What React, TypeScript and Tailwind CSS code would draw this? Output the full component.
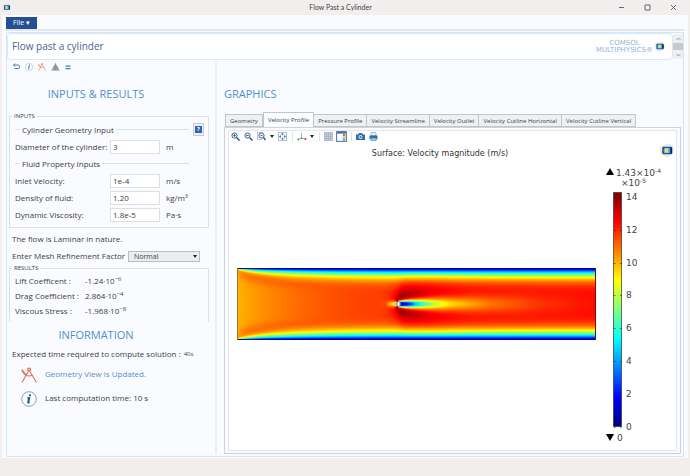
import type { ReactNode } from "react";

/* ---------- velocity field ---------- */

const PLOT_W = 358;
const PLOT_H = 72;
const CYL_X = 160;
const CYL_Y = 36;

const clamp = (v: number) => Math.min(1, Math.max(0, v));

function jet(v: number) {
  const t = clamp(v);
  const band = (c: number) => Math.round(255 * clamp(1.5 - Math.abs(4 * t - c)));
  return `rgb(${band(3)},${band(2)},${band(1)})`;
}

// Centreline velocity deficit behind the cylinder, [distance, deficit].
const WAKE: [number, number][] = [
  [0, 0.85],
  [3, 0.84],
  [8, 0.79],
  [13, 0.69],
  [18, 0.55],
  [26, 0.43],
  [38, 0.31],
  [55, 0.21],
  [90, 0.13],
  [140, 0.07],
  [200, 0.035],
];

function wakeDeficit(d: number) {
  for (let i = 1; i < WAKE.length; i++) {
    const [x1, y1] = WAKE[i];
    const [x0, y0] = WAKE[i - 1];
    if (d <= x1) return y0 + ((y1 - y0) * (d - x0)) / (x1 - x0);
  }
  return 0.035;
}

function speed(x: number, y: number) {
  const wall = Math.min(y, PLOT_H - y);
  const layer = 0.4 + 11.5 * (1 - Math.exp(-Math.pow(x / 75, 0.7)));
  const core = 0.7 + 0.185 * (1 - Math.exp(-x / 130));
  const shoulder =
    0.08 * Math.exp(-x / 60) * (1 - Math.exp(-x / 6)) * Math.exp(-Math.pow(wall - layer * 1.9, 2) / 60);
  const profile = Math.tanh(wall / layer);
  let v = (core + shoulder) * profile;

  const dx = x - CYL_X;
  const dy = y - CYL_Y;
  const side = Math.abs(dy);
  const r = Math.hypot(dx, dy) + 0.01;
  const along = dx - side * 0.4;
  const reach = Math.hypot(along / (along > 0 ? 1.8 : 0.4), Math.max(0, side - 4)) / 12;
  v += 0.19 * Math.exp(-reach) * clamp((side - 1) / 3) * profile;
  if (dx > 0) {
    v += 0.03 * (1 - Math.exp(-dx / 12)) * profile;
    v -= wakeDeficit(dx) * Math.exp((-dy * dy) / (2 * (4 + 0.42 * dx)));
  } else {
    v -= 0.42 * Math.exp(-Math.max(0, r - 2) / 1.8) * Math.pow(Math.abs(dx) / r, 2);
    v -= 0.09 * Math.exp(-r / 8) * Math.pow(Math.abs(dx) / r, 2);
  }
  return v;
}

const COLUMNS: number[] = [];
for (let x = 0; x <= PLOT_W; ) {
  COLUMNS.push(x);
  x += x < 20 || (x >= CYL_X - 10 && x < CYL_X + 24) ? 2 : x < CYL_X + 60 && x > CYL_X ? 4 : 8;
}
if (COLUMNS[COLUMNS.length - 1] !== PLOT_W) COLUMNS.push(PLOT_W);

const ROWS = Array.from({ length: PLOT_H }, (_, i) => i);

function VelocityField() {
  return (
    <svg
      className="block h-[72px] w-full"
      viewBox="0 0 358 72"
      preserveAspectRatio="none"
      role="img"
      aria-label="Velocity magnitude around the cylinder"
    >
      <defs>
        {ROWS.map((row) => (
          <linearGradient key={row} id={`row${row}`} gradientUnits="userSpaceOnUse" x1="0" x2="358" y1="0" y2="0">
            {COLUMNS.map((x) => (
              <stop key={x} offset={x / PLOT_W} stopColor={jet(speed(x, row + 0.5))} />
            ))}
          </linearGradient>
        ))}
      </defs>
      {ROWS.map((row) => (
        <rect key={row} x="0" y={row} width="358" height="1" fill={`url(#row${row})`} shapeRendering="crispEdges" />
      ))}
      <rect x="0" y="0" width="358" height="1" fill="#000084" />
      <rect x="0" y="71" width="358" height="1" fill="#000084" />
      <rect x="0" y="0" width="1" height="72" fill="#8f7a3a" />
      <rect x="357" y="0" width="1" height="72" fill="#7a0a10" />
      <rect x="158" y="35" width="2" height="2" fill="#59c9c9" />
      <rect x="160" y="34" width="2" height="4" fill="#fff" />
      <rect x="162" y="35" width="1" height="2" fill="#fff" />
    </svg>
  );
}

function ColorLegend() {
  const stops = Array.from({ length: 33 }, (_, i) => i / 32);
  return (
    <svg
      className="block h-[276px] w-[72px] shrink-0"
      viewBox="0 0 72 276"
      fontFamily="'DejaVu Sans', sans-serif"
      fontSize="9"
      fill="#444"
    >
      <defs>
        <linearGradient id="scale" x1="0" x2="0" y1="1" y2="0">
          {stops.map((s) => (
            <stop key={s} offset={s} stopColor={jet(s)} />
          ))}
        </linearGradient>
      </defs>
      <path d="M6 2l4 7H2z" fill="#000" />
      <text x="12" y="10">
        1.43×10
        <tspan dy="-3" fontSize="6">
          -4
        </tspan>
      </text>
      <text x="17" y="20">
        ×10
        <tspan dy="-3" fontSize="6">
          -5
        </tspan>
      </text>
      <rect x="9.500" y="26.500" width="8" height="234" fill="url(#scale)" stroke="#333" strokeOpacity=".7" />
      {[0, 2, 4, 6, 8, 10, 12, 14].map((n) => {
        const y = Math.round(261 - n * 16.45);
        return (
          <g key={n}>
            <path d={`M10 ${y + 0.5}h1.500M16 ${y + 0.5}h1.500`} stroke="#222" strokeOpacity=".6" />
            <text x="22" y={y + 3}>
              {n}
            </text>
          </g>
        );
      })}
      <path d="M6 275l4-7H2z" fill="#000" />
      <text x="13" y="275">
        0
      </text>
    </svg>
  );
}

/* ---------- icons ---------- */

function Cube({ className }: { className: string }) {
  return (
    <svg className={className} viewBox="0 0 16 16" aria-hidden="true">
      <path d="M1 4l10-3 4 3v7l-6 4-6-2z" fill="#eceef0" stroke="#dcdfe3" strokeWidth=".6" />
      <rect x="3.500" y="4" width="10.500" height="8" rx="1.500" fill="#173f9e" />
      <rect x="5" y="5" width="7" height="6" rx="1" fill="#3fa9d8" />
      <rect x="6" y="5.500" width="4" height="5" rx="1" fill="#e6dc6a" />
      <path d="M12.500 5H14v6h-1.500z" fill="#0b1f66" />
    </svg>
  );
}

function Compass({ className }: { className: string }) {
  return (
    <svg className={className} viewBox="0 0 16 16" fill="none" stroke="#e0705c" strokeWidth="1.100" aria-hidden="true">
      <path d="M1 15.500L8 3l7.500 12.500" />
      <path d="M6.800 4V1.300h2.600V4" />
      <path d="M.8 2.500C2 8 7 10.500 11.500 8M.8 2.500L6 8.500" />
    </svg>
  );
}

function Info({ className }: { className: string }) {
  return (
    <svg className={className} viewBox="0 0 16 16" aria-hidden="true">
      <circle cx="8" cy="8" r="7.300" fill="#fcfdff" stroke="#6d89b0" strokeWidth=".8" />
      <circle cx="9" cy="4.300" r="1.100" fill="#1d4a8a" />
      <path d="M6.200 6.800h2.400L7.400 12h1.400M7.900 7l-1.200 5" fill="none" stroke="#1d4a8a" strokeWidth="1.200" />
    </svg>
  );
}

function Magnifier({ kind }: { kind: "in" | "out" | "box" }) {
  return (
    <svg className="size-[9px]" viewBox="0 0 18 18" fill="none" stroke="#2f5577" strokeWidth="1.800" aria-hidden="true">
      {kind === "box" && <path d="M1 1h10M1 1v14h9" strokeDasharray="2 2" stroke="#7a8794" />}
      <circle cx={kind === "box" ? 9 : 7} cy="7" r="5.200" fill="#eef6fc" />
      <path d={kind === "box" ? "M13 11l4 5" : "M11 11l6 6"} strokeWidth="2.800" />
      {kind !== "box" && <path d="M4.500 7h5" />}
      {kind === "in" && <path d="M7 4.500v5" />}
      {kind === "box" && <path d="M7 7h4" />}
    </svg>
  );
}

function Extents() {
  return (
    <svg className="size-[9px]" viewBox="0 0 18 18" fill="none" stroke="#4b6d91" strokeWidth="1.400" aria-hidden="true">
      <path d="M1 1h16v16H1z" stroke="#8ba1b8" />
      <path d="M9 3v12M3 9h12" strokeWidth="2" stroke="#3c77ad" />
      <path d="M6 5.500L9 2.500l3 3M6 12.500l3 3 3-3M5.500 6l-3 3 3 3M12.500 6l3 3-3 3" />
      <path d="M7 7h4v4H7z" fill="#fff" stroke="#fff" />
    </svg>
  );
}

function Axes() {
  return (
    <svg className="size-[10px]" viewBox="0 0 20 20" fill="none" strokeWidth="1.600" aria-hidden="true">
      <path d="M9 12V2" stroke="#7fa6dd" />
      <path d="M9 12l-6 3" stroke="#5aa56a" />
      <path d="M9 12l8 2" stroke="#e0707c" />
      <circle cx="2.500" cy="15" r="1.800" fill="#2f9a48" />
      <circle cx="17" cy="14" r="1.800" fill="#d3253a" />
      <circle cx="9" cy="13" r="1.500" fill="#5a6b80" />
    </svg>
  );
}

function GridIcon() {
  return (
    <svg className="size-[9px]" viewBox="0 0 18 18" aria-hidden="true">
      <path d="M.5.5h17v17H.5z" fill="#c8d3df" stroke="#7f8a96" />
      <path d="M1 5h16M1 9h16M1 13h16M5 1v16M9 1v16M13 1v16" stroke="#94a3b3" />
    </svg>
  );
}

function LegendIcon() {
  return (
    <svg className="size-[11px]" viewBox="0 0 22 22" aria-hidden="true">
      <path d="M1 1h20v20H1z" fill="#c5dcf2" stroke="#5b80aa" strokeWidth="2" />
      <path d="M3 6h10v13H3z" fill="#fff" />
      <path d="M2 2h18v3H2z" fill="#44709c" />
      <path d="M14 6h4v5h-4z" fill="#e36b3d" />
      <path d="M14 10h4v5h-4z" fill="#f3cf4a" />
      <path d="M14 15h4v4h-4z" fill="#4aa7d6" />
    </svg>
  );
}

function Camera() {
  return (
    <svg className="size-[9px]" viewBox="0 0 18 18" aria-hidden="true">
      <path d="M0 5h4l2-3h6l2 3h4v11H0z" fill="#2f6da5" />
      <circle cx="9" cy="10" r="4" fill="#d7eafa" />
      <circle cx="9" cy="10" r="2" fill="#2f6da5" />
    </svg>
  );
}

function Printer() {
  return (
    <svg className="size-[9px]" viewBox="0 0 18 18" aria-hidden="true">
      <path d="M4 1h10v6H4z" fill="#e6eff8" stroke="#5d86ad" />
      <path d="M1 7h16v7H1z" fill="#2f6da5" />
      <path d="M3.500 12h11v5h-11z" fill="#a9c8e4" stroke="#2f6da5" />
    </svg>
  );
}

function Caret() {
  return (
    <svg className="h-[3px] w-[4px]" viewBox="0 0 8 6" aria-hidden="true">
      <path d="M0 0h8L4 6z" fill="#222" />
    </svg>
  );
}

/* ---------- form parts ---------- */

function IconButton({ label, children }: { label: string; children: ReactNode }) {
  return (
    <button type="button" aria-label={label} className="flex h-[11px] w-[13px] items-center justify-center">
      {children}
    </button>
  );
}

function Separator() {
  return (
    <span className="flex w-[6px] justify-center">
      <span className="h-[9px] w-px bg-[#dfe2e7]" />
    </span>
  );
}

function GroupTitle({ children }: { children: ReactNode }) {
  return (
    <div className="flex h-[17px] w-[174px] items-center gap-[2px]">
      <span className="h-px w-[5px] bg-[#dcdfe4]" />
      <span className="whitespace-nowrap">{children}</span>
      <span className="h-px flex-1 bg-[#dcdfe4]" />
    </div>
  );
}

function Field({ id, label, value, unit }: { id: string; label: string; value: string; unit: ReactNode }) {
  return (
    <div className="flex h-[17px] items-center">
      <label htmlFor={id} className="w-[95px] whitespace-nowrap">
        {label}
      </label>
      <input
        id={id}
        defaultValue={value}
        className="h-[14px] w-[50px] border border-[#dddfe3] bg-white px-[2px] leading-3 outline-none"
      />
      <span className="pl-[6px]">{unit}</span>
    </div>
  );
}

function Result({ label, mantissa, exponent }: { label: string; mantissa: string; exponent: string }) {
  return (
    <div className="flex h-[15px] items-center">
      <dt className="w-[70px] whitespace-nowrap">{label}</dt>
      <dd className="leading-3">
        {mantissa}·10<sup className="text-[6px]">{exponent}</sup>
      </dd>
    </div>
  );
}

const TABS = [
  "Geometry",
  "Velocity Profile",
  "Pressure Profile",
  "Velocity Streamline",
  "Velocity Outlet",
  "Velocity Cutline Horizontal",
  "Velocity Cutline Vertical",
];

function SectionTitle({ children }: { children: ReactNode }) {
  return <h2 className="h-4 text-[11px] leading-4 text-[#4f90cb]">{children}</h2>;
}

function InputsPanel() {
  return (
    <section className="flex w-[210px] shrink-0 flex-col border-r-2 border-[#eceef2] pl-[2px] pr-[6px] text-[8px]">
      <div className="flex h-[11px] items-center gap-[3px] pl-[2px]">
        <button type="button" aria-label="Undo" className="flex w-[10px] justify-center">
          <svg className="size-[7px]" viewBox="0 0 14 14" fill="none" stroke="#4b7fb5" strokeWidth="2">
            <path d="M1 4h9a3 3 0 010 7H3M4 1L1 4l3 3" />
          </svg>
        </button>
        <button type="button" aria-label="Information" className="flex w-[10px] justify-center">
          <Info className="size-[8px] opacity-80" />
        </button>
        <button type="button" aria-label="Geometry" className="flex w-[10px] justify-center">
          <Compass className="size-[8px]" />
        </button>
        <button type="button" aria-label="Mesh" className="flex w-[10px] justify-center">
          <svg className="size-[9px]" viewBox="0 0 18 18">
            <path d="M9 2l8.500 15H.5z" fill="#9aa0a6" />
            <path d="M9 2v15M5 9l8 8M13 9l-8 8M5 10h8" stroke="#868c93" />
          </svg>
        </button>
        <button type="button" aria-label="Compute" className="flex w-[10px] justify-center">
          <svg className="size-[6px]" viewBox="0 0 12 12">
            <path d="M1 4h10M1 9h10" stroke="#2f86a8" strokeWidth="2.500" />
          </svg>
        </button>
      </div>

      <div className="mt-[14px] flex justify-center pr-[26px]">
        <SectionTitle>INPUTS &amp; RESULTS</SectionTitle>
      </div>

      <fieldset className="mt-[9px] border border-[#dcdfe4] pb-1 pl-[5px]">
        <legend className="-ml-[3px] px-[2px] text-[6px] leading-[10px]">INPUTS</legend>
        <div className="flex items-center justify-between pr-1">
          <GroupTitle>Cylinder Geometry Input</GroupTitle>
          <button
            type="button"
            aria-label="Help"
            className="flex h-[13px] w-[11px] items-center justify-center border border-[#c9ccd1] bg-[#edeff2]"
          >
            <span className="size-[7px] bg-[#2a67ad] text-[6px] font-bold leading-[7px] text-white">?</span>
          </button>
        </div>
        <Field id="diameter" label="Diameter of the cylinder:" value="3" unit="m" />
        <GroupTitle>Fluid Property Inputs</GroupTitle>
        <Field id="velocity" label="Inlet Velocity:" value="1e-4" unit="m/s" />
        <Field id="density" label="Density of fluid:" value="1.20" unit="kg/m³" />
        <Field id="viscosity" label="Dynamic Viscosity:" value="1.8e-5" unit="Pa·s" />
      </fieldset>

      <p className="mt-1 pl-[3px] leading-[14px]">The flow is Laminar in nature.</p>
      <div className="mt-[3px] flex h-[14px] items-center justify-between pl-[3px] pr-[9px]">
        <label htmlFor="mesh" className="whitespace-nowrap">
          Enter Mesh Refinement Factor
        </label>
        <div className="relative">
          <select
            id="mesh"
            className="block h-[11px] w-[72px] appearance-none border border-[#b9bcc1] bg-[#ebedef] pl-[5px] text-[7px] leading-[9px]"
          >
            <option>Normal</option>
          </select>
          <span className="pointer-events-none absolute right-[3px] top-1">
            <Caret />
          </span>
        </div>
      </div>

      <fieldset className="border border-b-0 border-[#dcdfe4] pb-1 pl-[5px]">
        <legend className="-ml-[3px] px-[2px] text-[6px] leading-[10px]">RESULTS</legend>
        <dl>
          <Result label="Lift Coefficent :" mantissa="-1.24" exponent="−6" />
          <Result label="Drag Coefficient :" mantissa="2.864" exponent="−4" />
          <Result label="Viscous Stress :" mantissa="-1.968" exponent="−8" />
        </dl>
      </fieldset>

      <div className="mt-[5px] flex justify-center pr-[26px]">
        <SectionTitle>INFORMATION</SectionTitle>
      </div>
      <p className="mt-1 flex items-center gap-[3px] pl-[3px] leading-[14px]">
        <span className="whitespace-nowrap">Expected time required to compute solution :</span>
        <span className="text-[6px]">40s</span>
      </p>
      <div className="mt-[6px] flex h-[18px] pl-[12px] leading-[14px] text-[#4f90cb]">
        <Compass className="size-[16px]" />
        <p className="pl-2">Geometry View is Updated.</p>
      </div>
      <div className="mt-[6px] flex h-[18px] pl-[12px] leading-[14px]">
        <Info className="size-[16px]" />
        <p className="pl-2">Last computation time: 10 s</p>
      </div>
    </section>
  );
}

function GraphicsPanel() {
  return (
    <section className="flex min-w-0 flex-1 flex-col pl-[7px] pr-[2px]">
      <div className="mt-[25px]">
        <SectionTitle>GRAPHICS</SectionTitle>
      </div>
      <div role="tablist" className="mt-[10px] flex h-[15px] items-end pl-px">
        {TABS.map((tab) =>
          tab === "Velocity Profile" ? (
            <button
              key={tab}
              type="button"
              role="tab"
              aria-selected="true"
              className="h-[15px] whitespace-nowrap border border-b-0 border-[#c2c5ca] bg-[#fbfcff] px-1 text-[6px] leading-[13px]"
            >
              {tab}
            </button>
          ) : (
            <button
              key={tab}
              type="button"
              role="tab"
              aria-selected="false"
              className="h-[13px] whitespace-nowrap border border-l-0 border-[#c2c5ca] bg-[#eef0f2] px-1 text-[6px] leading-3 first:border-l"
            >
              {tab}
            </button>
          ),
        )}
      </div>
      <div className="flex flex-1 flex-col border border-[#cfd2d8] px-[3px] py-[2px]">
        <div className="flex flex-1 flex-col border border-[#e3e6ec] bg-white">
          <div className="flex h-[11px] items-center">
            <IconButton label="Zoom in">
              <Magnifier kind="in" />
            </IconButton>
            <IconButton label="Zoom out">
              <Magnifier kind="out" />
            </IconButton>
            <IconButton label="Zoom box">
              <Magnifier kind="box" />
            </IconButton>
            <span className="px-[2px]">
              <Caret />
            </span>
            <IconButton label="Zoom extents">
              <Extents />
            </IconButton>
            <Separator />
            <IconButton label="View orientation">
              <Axes />
            </IconButton>
            <span className="px-[2px]">
              <Caret />
            </span>
            <Separator />
            <IconButton label="Show grid">
              <GridIcon />
            </IconButton>
            <IconButton label="Show legends">
              <LegendIcon />
            </IconButton>
            <Separator />
            <IconButton label="Snapshot">
              <Camera />
            </IconButton>
            <IconButton label="Print">
              <Printer />
            </IconButton>
          </div>
          <div className="flex h-[24px] items-center">
            <h3 className="flex-1 pr-2 text-center font-['DejaVu_Sans',sans-serif] text-[8px] text-[#333]">
              Surface: Velocity magnitude (m/s)
            </h3>
            <Cube className="mb-2 mr-[2px] size-[15px]" />
          </div>
          <div className="flex items-center gap-2 pl-[8px]">
            <div className="min-w-0 flex-1">
              <VelocityField />
            </div>
            <ColorLegend />
          </div>
        </div>
      </div>
    </section>
  );
}

export default function App() {
  return (
    <div className="flex min-h-screen flex-col bg-[#f1eeed] pb-[18px] font-['Open_Sans','Noto_Sans',sans-serif] text-[#3c3e42]">
      <header className="flex h-[15px] items-center font-['Lato',sans-serif] text-[7px]">
        <div className="flex-1 pl-[2px]">
          <Cube className="size-[9px]" />
        </div>
        <h1>Flow Past a Cylinder</h1>
        <div className="flex flex-1 justify-end gap-[15px] pr-[11px] text-[#666]">
          <button type="button" aria-label="Minimize" className="flex size-[11px] items-center justify-center">
            <svg className="size-[7px]" viewBox="0 0 7 7">
              <path d="M1 3.500h5" stroke="currentColor" />
            </svg>
          </button>
          <button type="button" aria-label="Maximize" className="flex size-[11px] items-center justify-center">
            <svg className="size-[7px]" viewBox="0 0 7 7">
              <path d="M1 1h5v5H1z" stroke="currentColor" fill="none" />
            </svg>
          </button>
          <button type="button" aria-label="Close" className="flex size-[11px] items-center justify-center">
            <svg className="size-[7px]" viewBox="0 0 7 7">
              <path d="M1 1l5 5M6 1L1 6" stroke="currentColor" />
            </svg>
          </button>
        </div>
      </header>

      <main className="mx-[2px] flex flex-1 flex-col bg-[#fafbff] pb-px pl-1 pr-1 pt-[2px]">
        <div className="flex h-[14px] border-b-2 border-[#e0e7f0]">
          <button type="button" className="flex h-3 w-[31px] items-center justify-center bg-[#254f93] text-[7px] text-white">
            File&nbsp;▾
          </button>
        </div>
        <div className="mt-px flex flex-1 flex-col border border-[#d2e6f9] pb-[2px]">
          <div className="flex h-[27px]">
            <div className="flex flex-1 items-center justify-between rounded-[4px] border border-[#d8e9fa] bg-white pl-1 pr-[7px]">
              <p className="text-[10px] text-[#44668f]">Flow past a cylinder</p>
              <div className="flex items-center gap-px">
                <p className="text-center font-['DejaVu_Sans',sans-serif] text-[7px] leading-[7px] text-[#8fb3d8]">
                  COMSOL
                  <br />
                  MULTIPHYSICS®
                </p>
                <Cube className="size-[11px]" />
              </div>
            </div>
            <div className="my-px flex w-[10px] flex-col items-center justify-between bg-[#eeeff1]">
              <svg className="h-[9px] w-[5px]" viewBox="0 0 5 9">
                <path d="M.5 6l2-2 2 2" fill="none" stroke="#999" />
              </svg>
              <span className="h-[7px] w-full bg-[#c8c9cb]" />
              <svg className="h-[9px] w-[5px]" viewBox="0 0 5 9">
                <path d="M.5 4l2 2 2-2" fill="none" stroke="#999" />
              </svg>
            </div>
          </div>
          <div className="flex flex-1 pt-px">
            <InputsPanel />
            <GraphicsPanel />
          </div>
        </div>
      </main>
    </div>
  );
}
